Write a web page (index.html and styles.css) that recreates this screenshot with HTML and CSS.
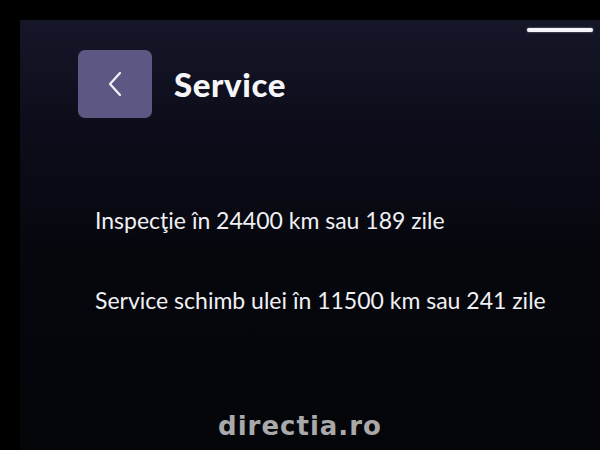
FILE: index.html
```
<!DOCTYPE html>
<html lang="ro">
<head>
    <meta charset="UTF-8">
    <meta name="viewport" content="width=device-width, initial-scale=1.0">
    <title>Service</title>
    <link rel="stylesheet" href="styles.css">
</head>
<body>
    <div class="screen">
        <div class="status-bar"></div>
        <div class="header">
            <button class="back-btn" aria-label="Înapoi">
                <svg width="14" height="26" viewBox="0 0 14 26">
                    <path d="M12 2 L2 13 L12 24" fill="none" stroke="#f2f1f7" stroke-width="2.2" stroke-linecap="round" stroke-linejoin="round"/>
                </svg>
            </button>
            <h1 class="title">Service</h1>
        </div>
        <div class="service-list">
            <p class="service-item">Inspecţie în 24400 km sau 189 zile</p>
            <p class="service-item">Service schimb ulei în 11500 km sau 241 zile</p>
        </div>
    </div>
    <div class="watermark">directia.ro</div>
</body>
</html>
```
FILE: styles.css
```
* {
    margin: 0;
    padding: 0;
    box-sizing: border-box;
}

body {
    width: 600px;
    height: 450px;
    overflow: hidden;
    background-color: #000;
    padding: 20px 0 0 20px;
    position: relative;
    font-family: 'Lato', 'Noto Sans', sans-serif;
}

.screen {
    height: 430px;
    background: linear-gradient(180deg, #151729 0%, #0c0d1a 25%, #06070d 55%, #040509 100%);
    color: #f4f4f8;
    padding: 30px 0 0 58px;
}

.status-bar {
    position: absolute;
    top: 28px;
    right: 7px;
    width: 66px;
    height: 4px;
    border-radius: 2px;
    background-color: #f6f6fa;
    box-shadow: 0 0 2px rgba(255, 255, 255, 0.6);
}

.header {
    display: flex;
    align-items: center;
    gap: 22px;
}

.back-btn {
    width: 74px;
    height: 68px;
    border: none;
    border-radius: 7px;
    background-color: #5d5883;
    display: flex;
    align-items: center;
    justify-content: center;
}

.title {
    font-size: 33px;
    font-weight: 900;
    letter-spacing: 0.6px;
    color: #f6f6fa;
}

.service-list {
    display: flex;
    flex-direction: column;
    gap: 49px;
    padding: 87px 0 0 17px;
}

.service-item {
    font-size: 23px;
    font-weight: 400;
    line-height: 31px;
    color: #f0f0f4;
}

.watermark {
    position: absolute;
    left: 0;
    right: 0;
    bottom: 9px;
    text-align: center;
    font-family: 'DejaVu Sans', sans-serif;
    font-weight: 700;
    font-size: 26px;
    letter-spacing: 1px;
    color: #a9a9a9;
}
```
